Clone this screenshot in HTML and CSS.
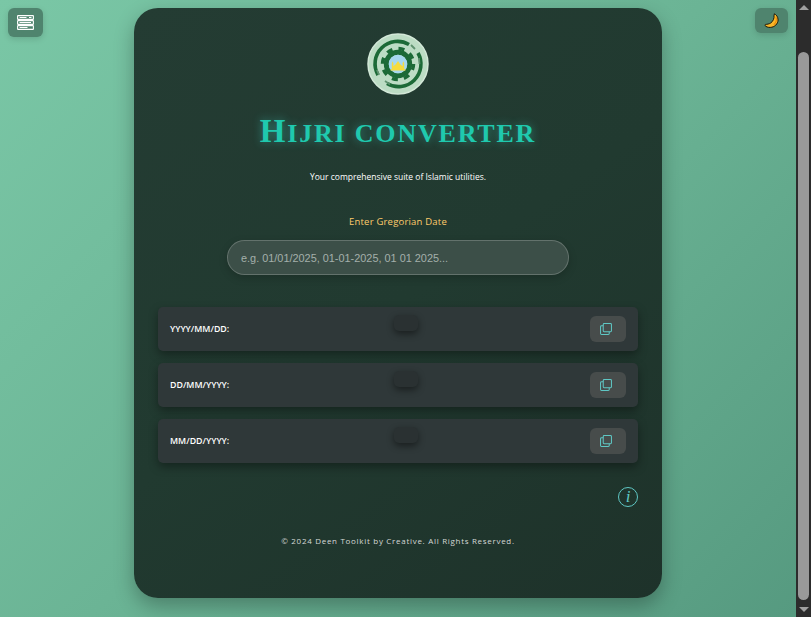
FILE: index.html
```html
<!DOCTYPE html>
<html lang="en">
<head>
<meta charset="utf-8">
<title>Hijri Converter</title>
<link rel="stylesheet" href="styles.css">
</head>
<body>
<div class="page">
  <button class="corner corner-left" aria-label="Menu">
    <svg width="17" height="15" viewBox="0 0 17 15" fill="none" stroke="#fff" stroke-width="1.100">
      <rect x=".6" y=".6" width="15.800" height="3.800" rx=".5"/>
      <rect x=".6" y="5.600" width="15.800" height="3.800" rx=".5"/>
      <rect x=".6" y="10.600" width="15.800" height="3.800" rx=".5"/>
      <path d="M2.500 2.500h7M12 2.500h2.500M2.500 7.500h11.500M2.500 12.500h8" stroke-width="1"/>
    </svg>
  </button>
  <button class="corner corner-right" aria-label="Theme">
    <svg width="16" height="16" viewBox="0 0 16 16">
      <path d="M10.300 .8c1.600 .6 3.900 2.900 3.800 6.200-.1 3.900-3.600 7.300-7.800 7.400-2.200 .1-4.300-.6-5.200-1.800-.3-.5 0-1.100 .6-1.200 1.400-.1 3.300-.3 5-1.400 2.400-1.700 3.700-4.600 3.300-7.700-.1-.5 0-.7 .3-.5z" fill="#fbb829" stroke="#1d1708" stroke-width="1"/>
      <path d="M12 4c.9 2.600 .1 5.700-2.300 7.700" fill="none" stroke="#f08c0a" stroke-width="1.200"/>
    </svg>
  </button>

  <main class="card">
    <svg class="logo" width="62" height="62" viewBox="0 0 62 62">
      <circle cx="31" cy="31" r="30" fill="#bcdcc4" stroke="#d3e8d8" stroke-width="1.500"/>
      <path d="M11 42A22.500 22.500 0 0 1 42 11.500M51 20A22.500 22.500 0 0 1 20 50.500" fill="none" stroke="#1c6a37" stroke-width="3.600"/>
      <circle cx="31" cy="31" r="15.500" fill="none" stroke="#1c6a37" stroke-width="3.500" stroke-dasharray="6 6.180"/>
      <circle cx="31" cy="31" r="11.700" fill="none" stroke="#1c6a37" stroke-width="5"/>
      <circle cx="31" cy="31" r="9.300" fill="#a6d8ee"/>
      <path d="M23.500 37.500h15v-1.200h-1.300v-6l-.8-2-.8 2v3l-2.200-1.800-2.400-3.500-2.400 3.500-2.200 1.800v-3l-.8-2-.8 2v6h-1.300z" fill="#f6dc3c"/>
      <path d="M44 12l4 4M52 25l.5 6M10 37l2 5M18 48l5 3.500" stroke="#5f9270" stroke-width="1.800" fill="none"/>
    </svg>
    <h1 class="title">Hijri Converter</h1>
    <p class="subtitle">Your comprehensive suite of Islamic utilities.</p>
    <label class="field-label" for="date">Enter Gregorian Date</label>
    <input id="date" class="date-input" type="text" placeholder="e.g. 01/01/2025, 01-01-2025, 01 01 2025...">

    <section class="results">
      <div class="row">
        <span class="row-label">YYYY/MM/DD:</span>
        <span class="row-value"></span>
        <button class="copy" aria-label="Copy">
          <svg width="13" height="13" viewBox="0 0 13 13" fill="none" stroke="#5fc7c4" stroke-width="1.100">
            <rect x="3.500" y=".6" width="8.900" height="8.900" rx="1"/>
            <path d="M3.500 3H1.600A1 1 0 0 0 .6 4v7.400a1 1 0 0 0 1 1H9a1 1 0 0 0 1-1V9.500"/>
          </svg>
        </button>
      </div>
      <div class="row">
        <span class="row-label">DD/MM/YYYY:</span>
        <span class="row-value"></span>
        <button class="copy" aria-label="Copy">
          <svg width="13" height="13" viewBox="0 0 13 13" fill="none" stroke="#5fc7c4" stroke-width="1.100">
            <rect x="3.500" y=".6" width="8.900" height="8.900" rx="1"/>
            <path d="M3.500 3H1.600A1 1 0 0 0 .6 4v7.400a1 1 0 0 0 1 1H9a1 1 0 0 0 1-1V9.500"/>
          </svg>
        </button>
      </div>
      <div class="row">
        <span class="row-label">MM/DD/YYYY:</span>
        <span class="row-value"></span>
        <button class="copy" aria-label="Copy">
          <svg width="13" height="13" viewBox="0 0 13 13" fill="none" stroke="#5fc7c4" stroke-width="1.100">
            <rect x="3.500" y=".6" width="8.900" height="8.900" rx="1"/>
            <path d="M3.500 3H1.600A1 1 0 0 0 .6 4v7.400a1 1 0 0 0 1 1H9a1 1 0 0 0 1-1V9.500"/>
          </svg>
        </button>
      </div>
    </section>

    <div class="info-line"><span class="info">i</span></div>
    <footer class="footer">© 2024 Deen Toolkit by Creative. All Rights Reserved.</footer>
  </main>
</div>
<div class="scrollbar" aria-hidden="true">
  <span class="arrow-up"></span>
  <span class="track"><span class="thumb"></span></span>
  <span class="arrow-down"></span>
</div>
</body>
</html>
```

FILE: styles.css
```css
* { box-sizing: border-box; }
html, body { margin: 0; height: 617px; overflow: hidden; }
body {
  display: flex;
  font-family: "Open Sans", sans-serif;
  background: #2c2c2c;
}
.page {
  position: relative;
  width: 796px;
  height: 617px;
  flex: none;
  padding: 8px 0 0 134px;
  background: linear-gradient(135deg, #7ac7a6 0%, #6bb495 50%, #569a80 100%);
}
.corner {
  position: absolute;
  top: 8px;
  display: flex;
  align-items: center;
  justify-content: center;
  padding: 0;
  border: 0;
  border-radius: 6px;
  background: #4f846e;
  box-shadow: 0 2px 6px rgba(0, 0, 0, .14);
}
.corner-left { left: 8px; width: 35px; height: 29px; }
.corner-right { left: 755px; width: 33px; height: 25px; }

.card {
  display: flex;
  flex-direction: column;
  align-items: center;
  width: 528px;
  height: 590px;
  padding: 25px 24px 0;
  border-radius: 24px;
  background: linear-gradient(145deg, #243c33 0%, #213a30 50%, #1e322a 100%);
  box-shadow: 0 8px 20px rgba(0, 0, 0, .28);
}
.logo { display: block; flex: none; }
.title {
  margin: 18px 0 0;
  height: 36px;
  font: 700 26px/36px "Liberation Serif", serif;
  text-transform: uppercase;
  letter-spacing: 1.800px;
  color: #1fc9ae;
  text-shadow: 0 0 10px rgba(64, 224, 208, .45);
  white-space: nowrap;
}
.title::first-letter { font-size: 33px; }
.subtitle {
  margin: 21px 0 0;
  font-size: 8.500px;
  line-height: 14px;
  color: #fff;
}
.field-label {
  margin-top: 31px;
  font-size: 9.500px;
  line-height: 14px;
  letter-spacing: .2px;
  color: #ffcb6b;
}
.date-input {
  display: block;
  width: 342px;
  height: 35px;
  margin-top: 11px;
  padding: 0 13px;
  border: 1px solid rgba(255, 255, 255, .2);
  border-radius: 18px;
  outline: 0;
  background: #3c4f48;
  box-shadow: 0 3px 8px rgba(0, 0, 0, .18);
  font: 10.900px "Liberation Sans", sans-serif;
  color: #fff;
}
.date-input::placeholder { color: #a4afab; opacity: 1; }

.results {
  display: flex;
  flex-direction: column;
  gap: 12px;
  width: 480px;
  margin-top: 32px;
}
.row {
  display: grid;
  grid-template-columns: 224px 24px 1fr;
  height: 44px;
  padding: 8px 12px;
  border-radius: 5px;
  background: #2f3839;
  box-shadow: 0 4px 10px rgba(0, 0, 0, .36);
}
.row-label {
  align-self: center;
  font-size: 8.800px;
  font-weight: 600;
  color: #fff;
}
.row-value {
  height: 16px;
  border-radius: 5px;
  background: #2a3132;
  box-shadow: 0 3px 7px rgba(0, 0, 0, .45);
}
.copy {
  justify-self: end;
  display: flex;
  align-items: center;
  justify-content: center;
  width: 36px;
  height: 26px;
  padding: 0 4px 0 0;
  margin-top: 1px;
  border: 0;
  border-radius: 6px;
  background: #474c4b;
}
.copy svg { width: 12px; height: 12px; }
.info-line {
  display: flex;
  justify-content: flex-end;
  width: 480px;
  margin-top: 24px;
}
.info {
  width: 20px;
  height: 20px;
  border: 1.500px solid #5fc7c4;
  border-radius: 50%;
  font: italic 400 17px/17px "Liberation Serif", serif;
  color: #5fc7c4;
  text-align: center;
}
.footer {
  margin-top: 27px;
  font-size: 8px;
  line-height: 14px;
  letter-spacing: .7px;
  color: #d5d9d7;
}

.scrollbar {
  display: flex;
  flex-direction: column;
  align-items: center;
  width: 15px;
  height: 617px;
  background: #2c2c2c;
}
.arrow-up, .arrow-down {
  flex: none;
  width: 0;
  height: 0;
  border-left: 5px solid transparent;
  border-right: 5px solid transparent;
}
.arrow-up { margin: 5px 0; border-bottom: 5px solid #a0a0a0; }
.arrow-down { margin: 5px 0; border-top: 5px solid #a0a0a0; }
.track { flex: 1; display: flex; width: 100%; padding: 37px 2px 2px; }
.thumb { flex: 1; border-radius: 6px; background: #9a9a9a; }
```
